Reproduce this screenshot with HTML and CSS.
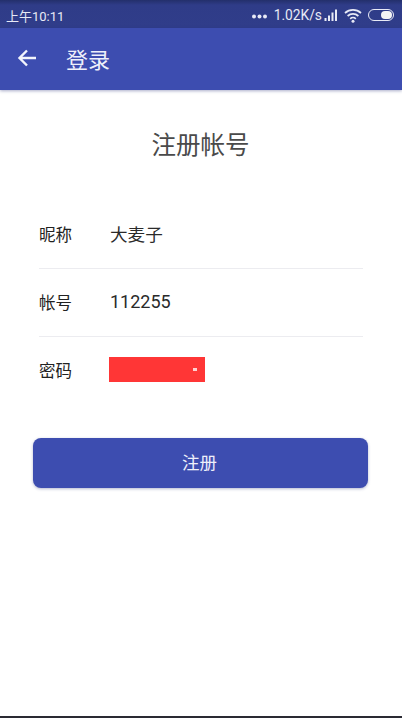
FILE: index.html
```html
<!DOCTYPE html>
<html lang="zh">
<head>
<meta charset="utf-8">
<title>注册帐号</title>
<link rel="stylesheet" href="styles.css">
</head>
<body>
<div class="page">
  <div class="status">
    <span class="time">上午10:11</span>
    <div class="status-right">
      <svg class="dots" width="15" height="5" viewBox="0 0 15 5"><circle cx="2" cy="2.500" r="2"/><circle cx="7.500" cy="2.500" r="2"/><circle cx="13" cy="2.500" r="2"/></svg>
      <span class="speed">1.02K/s</span>
      <svg class="signal" width="14" height="12" viewBox="0 0 14 12"><rect x="0.500" y="9" width="2" height="3"/><rect x="4" y="6.500" width="2" height="5.500"/><rect x="7.500" y="3.500" width="2" height="8.500"/><rect x="11" y="0.500" width="2" height="11.500"/></svg>
      <svg class="wifi" width="19" height="15" viewBox="0 0 19 15"><path d="M1 5a12 12 0 0 1 16 0M3.600 8a8 8 0 0 1 10.800 0M6.200 10.800a4 4 0 0 1 5.600 0" fill="none" stroke="#e8eaf6" stroke-width="1.700"/><circle cx="9" cy="13.300" r="1.500" fill="#e8eaf6"/></svg>
      <div class="battery"><div class="battery-level"></div></div>
    </div>
  </div>
  <header class="appbar">
    <svg class="back" width="20" height="18" viewBox="0 0 20 18"><path d="M19 9H3M10 1.500 2.500 9l7.500 7.500" fill="none" stroke="#f2f4fc" stroke-width="2.400"/></svg>
    <span class="appbar-title">登录</span>
  </header>
  <main class="content">
    <h1 class="title">注册帐号</h1>
    <div class="form">
      <div class="row"><span class="label">昵称</span><span class="value">大麦子</span></div>
      <div class="row"><span class="label">帐号</span><span class="value num">112255</span></div>
      <div class="row last"><span class="label">密码</span><div class="mask"><i class="mask-dot"></i></div></div>
    </div>
    <button class="submit" type="button">注册</button>
  </main>
  <div class="edge"></div>
</div>
</body>
</html>
```
FILE: styles.css
```css
* { box-sizing: border-box; }
html, body { margin: 0; padding: 0; }
body {
  width: 402px;
  height: 718px;
  overflow: hidden;
  background: #fff;
  font-family: "Roboto", "Noto Sans CJK SC", sans-serif;
}
.page { height: 718px; display: flex; flex-direction: column; }
.status {
  height: 28px;
  flex: none;
  background: linear-gradient(#232f6b 0, #2f3c88 5px, #303d8a 100%);
  color: #e8eaf6;
  display: flex;
  align-items: center;
  justify-content: space-between;
  padding: 2px 8px 0 6px;
}
.time { font-size: 13px; }
.status-right { display: flex; align-items: center; }
.dots { fill: #e8eaf6; margin-right: 7px; margin-top: 3px; }
.speed { font-size: 13.800px; margin-right: 2px; }
.signal { fill: #e8eaf6; margin-right: 6px; }
.wifi { margin-right: 5px; }
.battery {
  width: 26px;
  height: 12px;
  border: 1.500px solid #e8eaf6;
  border-radius: 6px;
  padding: 1px;
  display: flex;
  justify-content: flex-end;
}
.battery-level { width: 11px; background: #f5f5f5; border-radius: 4px; }
.appbar {
  height: 62px;
  flex: none;
  background: #3d4db0;
  box-shadow: 0 1px 3px rgba(40, 50, 120, .4);
  display: flex;
  align-items: center;
  padding: 0 0 2px 17px;
  color: #eef0fa;
  position: relative;
}
.back { margin-right: 29px; }
.appbar-title { font-size: 22px; }
.content { flex: 1; display: flex; flex-direction: column; padding: 0 34px 0 33px; }
.title {
  margin: 40px 0 0;
  text-align: center;
  font-size: 24.500px;
  line-height: 32px;
  font-weight: 400;
  color: #4a4a4a;
}
.form { margin: 39px 5px 0 6px; }
.row {
  height: 68px;
  padding-bottom: 2px;
  display: flex;
  align-items: center;
  border-bottom: 1px solid #ececf0;
}
.row.last { border-bottom: 0; height: 65px; padding-bottom: 0; }
.label { width: 71px; font-size: 16.500px; color: #222; flex: none; }
.value { font-size: 17.600px; color: #2a2a2a; }
.num { font-size: 18px; }
.mask {
  width: 96px;
  height: 25px;
  margin-left: -1px;
  background: #ff3636;
  display: flex;
  align-items: center;
  justify-content: flex-end;
  padding-right: 8px;
}
.mask-dot { width: 4px; height: 3px; background: #ffd0d0; display: block; }
.submit {
  margin-top: 36px;
  height: 50px;
  flex: none;
  border: 0;
  border-radius: 8px;
  padding: 0 2px 3px 0;
  background: #3d4db0;
  color: #eef0fa;
  font-family: inherit;
  font-size: 17.500px;
  box-shadow: 0 1px 3px rgba(40, 50, 120, .35);
}
.edge { height: 2px; flex: none; background: #2a2a33; }
```
